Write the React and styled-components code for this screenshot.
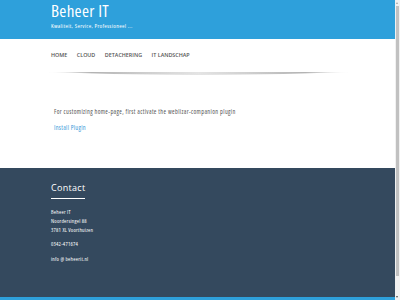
import React from 'react';
import styled, { createGlobalStyle } from 'styled-components';

const GlobalStyle = createGlobalStyle`
  html, body {
    margin: 0;
    padding: 0;
    height: 300px;
    overflow: hidden;
    background: #ffffff;
  }
  body {
    font-family: "Open Sans", "Liberation Sans", sans-serif;
  }
`

const Page = styled.div`
  width: 395px;
  height: 300px;
  display: flex;
  flex-direction: column;
`

const Header = styled.header`
  height: 39px;
  flex-shrink: 0;
  background: #2ea0db;
  padding-left: 51px;
  box-sizing: border-box;
`

const SiteTitle = styled.h1`
  margin: 0;
  padding-top: 1px;
  font-size: 17px;
  line-height: 19px;
  font-weight: 400;
  font-stretch: 75%;
  letter-spacing: 0.3px;
  color: #ffffff;
`

const Tagline = styled.p`
  margin: 2px 0 0;
  font-size: 6px;
  line-height: 8px;
  font-stretch: 75%;
  letter-spacing: 0.3px;
  color: #ffffff;
`

const Nav = styled.nav`
  display: flex;
  gap: 9.5px;
  padding: 12px 0 0 51px;
  height: 20px;
  flex-shrink: 0;
`

const NavItem = styled.a`
  font-size: 5.4px;
  line-height: 8px;
  font-weight: 600;
  color: #555555;
  text-transform: uppercase;
  text-decoration: none;
`

const ShadowLine = styled.svg`
  display: block;
  flex-shrink: 0;
  margin-left: 46px;
  width: 305px;
  height: 7px;
`

const Content = styled.main`
  padding: 30px 0 0 54px;
  height: 90px;
  flex-shrink: 0;
  box-sizing: border-box;
`

const Notice = styled.p`
  margin: 0;
  font-size: 6.3px;
  line-height: 8px;
  font-stretch: 75%;
  letter-spacing: 0.35px;
  color: #555555;
`

const PluginLink = styled.a`
  display: block;
  margin-top: 8px;
  font-size: 6.3px;
  line-height: 8px;
  font-stretch: 75%;
  letter-spacing: 0.3px;
  color: #3a9ad9;
  text-decoration: none;
`

const Footer = styled.footer`
  flex: 1;
  background: #34495e;
  border-bottom: 3px solid #2ea0db;
  padding: 14px 0 0 51px;
`

const FooterTitle = styled.h3`
  width: fit-content;
  margin: 0;
  padding-bottom: 4px;
  font-size: 9px;
  line-height: 12px;
  font-weight: 400;
  letter-spacing: 0.3px;
  color: #ffffff;
  border-bottom: 1.5px solid #ffffff;
`

const FooterBlock = styled.p`
  margin: ${p => p.$top}px 0 0;
  font-size: 5.5px;
  line-height: 9px;
  font-stretch: 75%;
  letter-spacing: 0.2px;
  color: #ffffff;
`

const ScrollTrack = styled.div`
  position: fixed;
  top: 0;
  right: 0;
  width: 5px;
  height: 300px;
  background: #f1f1f1;
`

const ScrollThumb = styled.div`
  position: absolute;
  left: 1px;
  top: 6px;
  width: 3px;
  height: 270px;
  background: #c1c1c1;
`

const ScrollArrow = styled.div`
  position: absolute;
  left: 1px;
  ${p => (p.$down ? 'bottom: 2px;' : 'top: 2px;')}
  width: 0;
  height: 0;
  border-left: 1.5px solid transparent;
  border-right: 1.5px solid transparent;
  ${p => (p.$down ? 'border-top: 2px solid #505050;' : 'border-bottom: 2px solid #a3a3a3;')}
`

export default function App() {
  return (
    <>
      <GlobalStyle />
      <Page>
        <Header>
          <SiteTitle>Beheer IT</SiteTitle>
          <Tagline>Kwaliteit, Service, Professioneel ...</Tagline>
        </Header>

        <Nav>
          <NavItem href="#">Home</NavItem>
          <NavItem href="#">Cloud</NavItem>
          <NavItem href="#">Detachering</NavItem>
          <NavItem href="#">IT Landschap</NavItem>
        </Nav>

        <ShadowLine viewBox="0 0 305 7" preserveAspectRatio="none">
          <defs>
            <linearGradient id="sh" x1="0" x2="1" y1="0" y2="0">
              <stop offset="0" stopColor="#bbbbbb" stopOpacity="0" />
              <stop offset="0.15" stopColor="#aaaaaa" stopOpacity="0.9" />
              <stop offset="0.5" stopColor="#d8d8d8" stopOpacity="0.7" />
              <stop offset="0.85" stopColor="#aaaaaa" stopOpacity="0.9" />
              <stop offset="1" stopColor="#bbbbbb" stopOpacity="0" />
            </linearGradient>
            <filter id="bl" x="-0.05" y="-1" width="1.1" height="3">
              <feGaussianBlur stdDeviation="0.6" />
            </filter>
          </defs>
          <path d="M0 1 L305 1 Q152 7 0 1 Z" fill="url(#sh)" filter="url(#bl)" />
        </ShadowLine>

        <Content>
          <Notice>For customizing home-page, first activate the weblizar-companion plugin</Notice>
          <PluginLink href="#">Install Plugin</PluginLink>
        </Content>

        <Footer>
          <FooterTitle>Contact</FooterTitle>
          <FooterBlock $top={9}>
            Beheer IT<br />
            Noordersingel 88<br />
            3781 XL Voorthuizen
          </FooterBlock>
          <FooterBlock $top={5}>0342-471674</FooterBlock>
          <FooterBlock $top={6}>info @ beheerit.nl</FooterBlock>
        </Footer>
      </Page>

      <ScrollTrack>
        <ScrollArrow />
        <ScrollThumb />
        <ScrollArrow $down />
      </ScrollTrack>
    </>
  );
}
